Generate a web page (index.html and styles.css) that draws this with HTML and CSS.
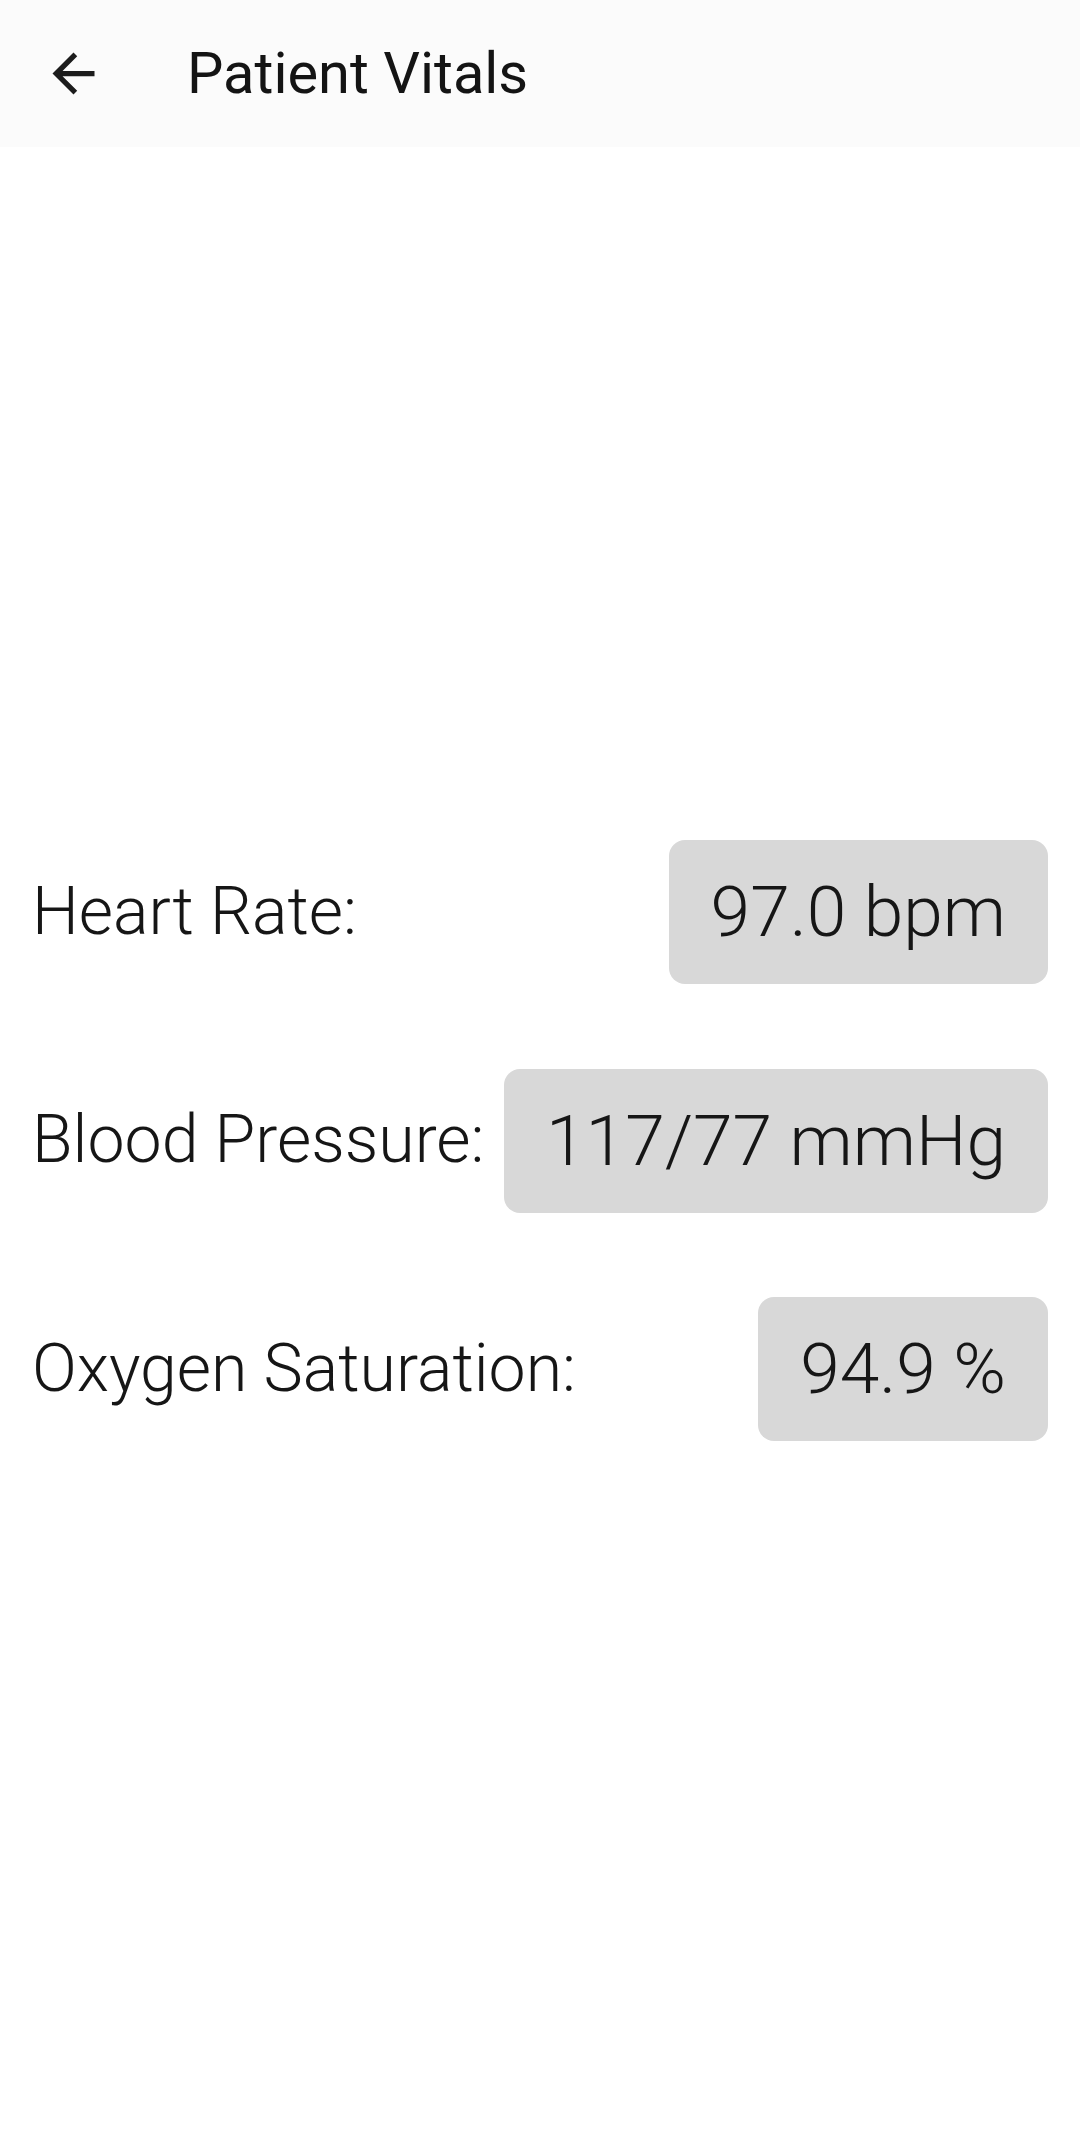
FILE: index.html
```html
<!DOCTYPE html>
<html lang="en">
<head>
<meta charset="utf-8">
<title>Patient Vitals</title>
<link rel="stylesheet" href="styles.css">
</head>
<body>
<div class="app">
  <header class="toolbar">
    <div class="nav-icon">
      <svg viewBox="0 0 24 24" width="63" height="63"><path d="M20 11H7.83l5.59-5.59L12 4l-8 8 8 8 1.41-1.41L7.83 13H20v-2z" fill="#1c1c1c"/></svg>
    </div>
    <h1 class="title">Patient Vitals</h1>
  </header>
  <main class="content">
    <div class="vitals">
      <div class="row">
        <span class="label">Heart Rate:</span>
        <span class="value">97.0 bpm</span>
      </div>
      <div class="row">
        <span class="label">Blood Pressure:</span>
        <span class="value">117/77 mmHg</span>
      </div>
      <div class="row">
        <span class="label">Oxygen Saturation:</span>
        <span class="value">94.9 %</span>
      </div>
    </div>
  </main>
</div>
</body>
</html>
```
FILE: styles.css
```css
html, body {
  margin: 0;
  padding: 0;
  background: #ffffff;
}
body {
  font-family: Roboto, "Noto Sans", sans-serif;
  color: #161616;
}
.app {
  width: 1080px;
  height: 2134px;
  display: flex;
  flex-direction: column;
}
.toolbar {
  height: 147px;
  flex: 0 0 147px;
  background: #fbfbfb;
  display: flex;
  align-items: center;
}
.nav-icon {
  width: 63px;
  height: 63px;
  margin-left: 42px;
  display: flex;
}
.title {
  margin: 0 0 0 82px;
  font-size: 57.75px;
  font-weight: 400;
  line-height: 1;
  color: #141414;
}
.content {
  flex: 1;
  display: flex;
  flex-direction: column;
  justify-content: center;
}
.vitals {
  display: flex;
  flex-direction: column;
  gap: 84.5px;
  padding: 0 32px;
}
.row {
  display: flex;
  align-items: center;
  justify-content: space-between;
  height: 144px;
}
.label {
  font-size: 66.2px;
  font-weight: 300;
  line-height: 1;
}
.value {
  height: 144px;
  box-sizing: border-box;
  padding: 0 42px;
  display: flex;
  align-items: center;
  background: #d8d8d8;
  border-radius: 16px;
  font-size: 71.3px;
  font-weight: 300;
  line-height: 1;
}
```
